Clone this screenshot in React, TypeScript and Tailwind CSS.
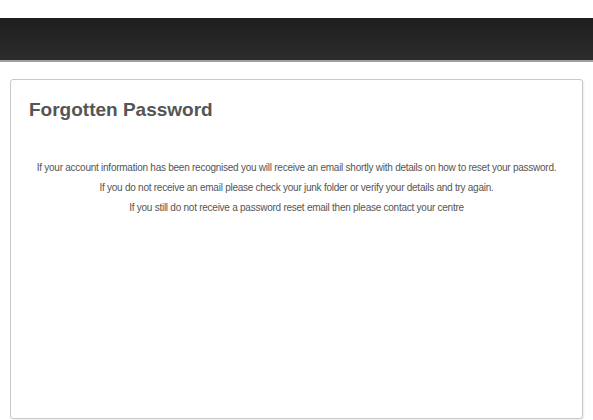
const messages = [
  'If your account information has been recognised you will receive an email shortly with details on how to reset your password.',
  'If you do not receive an email please check your junk folder or verify your details and try again.',
  'If you still do not receive a password reset email then please contact your centre',
];

const App = () => {
  return (
    <div className="h-[420px] w-[593px] overflow-hidden bg-white font-['Liberation_Sans',Arial,sans-serif]">
      <div className="h-[18px]" />
      <div className="h-[44px] bg-gradient-to-b from-[#1e1e1e] to-[#2c2c2c] border-b-2 border-[#a0a0a0]" />
      <div className="px-[10px] pt-[17px]">
        <div className="h-[340px] rounded-[3px] border border-[#c8c8c8] bg-white shadow-[1px_1px_2px_rgba(0,0,0,0.08)]">
          <h1 className="pl-[18px] pt-[18px] text-[19px] font-bold leading-[24px] text-[#555]">
            Forgotten Password
          </h1>
          <div className="mt-[40px] flex flex-col gap-[8px] whitespace-nowrap text-center text-[10px] leading-[12px] tracking-[-0.25px] text-[#555]">
            {messages.map((m) => (
              <p key={m}>{m}</p>
            ))}
          </div>
        </div>
      </div>
    </div>
  );
};

export default App;
